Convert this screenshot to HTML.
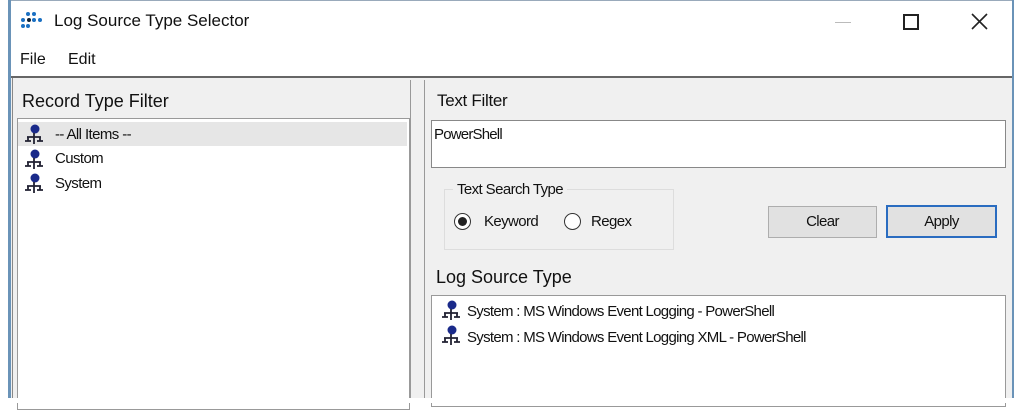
<!DOCTYPE html>
<html><head><style>
body{margin:0;width:1024px;height:403px;background:#fff;position:relative;overflow:hidden;font-family:"Liberation Sans",sans-serif;color:#111}
.a{position:absolute}
.ic{position:absolute;width:20px;height:22px}
</style></head><body>
<div class="a" style="left:0;top:0;width:9px;height:403px;background:#fff;border-right:1px solid #ccc"></div>
<div class="a" style="left:8px;top:0;width:3px;height:403px;background:#6a93b8"></div>
<div class="a" style="left:1012px;top:0;width:2px;height:403px;background:#6a93b8"></div>
<div class="a" style="left:11px;top:0;width:1001px;height:1px;background:#9ab"></div>
<svg class="a" style="left:20px;top:11px" width="26" height="22"><g fill="#1a6fc2"><circle cx="8" cy="3" r="2"/><circle cx="14" cy="3" r="2"/><circle cx="3" cy="9" r="2"/><circle cx="14" cy="9" r="2"/><circle cx="20" cy="9" r="2"/><circle cx="3" cy="15" r="2"/><circle cx="8" cy="15" r="2"/></g><circle cx="9" cy="9" r="2" fill="#123"/></svg>
<div class="a" style="left:54px;top:11px;font-size:17px">Log Source Type Selector</div>
<div class="a" style="left:835px;top:22px;width:16px;height:1px;background:#bbb"></div>
<div class="a" style="left:903px;top:14px;width:12px;height:12px;border:2px solid #222"></div>
<svg class="a" style="left:971px;top:13px" width="17" height="17"><path d="M1 1L16 16M16 1L1 16" stroke="#222" stroke-width="1.6"/></svg>
<div class="a" style="left:20px;top:51px;font-size:16px">File</div>
<div class="a" style="left:68px;top:51px;font-size:16px">Edit</div>
<div class="a" style="left:11px;top:76px;width:1001px;height:2px;background:#666"></div>
<div class="a" style="left:11px;top:78px;width:1001px;height:325px;background:#f0f0f0"></div>
<div class="a" style="left:12px;top:78px;width:398px;height:325px;border-left:1px solid #888"></div>
<div class="a" style="left:410px;top:80px;width:1px;height:323px;background:#999"></div>
<div class="a" style="left:424px;top:80px;width:1px;height:323px;background:#999"></div>
<div class="a" style="left:22px;top:91px;font-size:18px">Record Type Filter</div>
<div class="a" style="left:17px;top:118px;width:391px;height:290px;background:#fff;border:1px solid #999"></div>
<div class="a" style="left:18px;top:122px;width:389px;height:24px;background:#e6e6e6"></div>
<div class="a" style="left:55px;top:126px;font-size:15px;letter-spacing:-.6px">-- All Items --</div>
<div class="a" style="left:55px;top:150px;font-size:15px;letter-spacing:-.6px">Custom</div>
<div class="a" style="left:55px;top:175px;font-size:15px;letter-spacing:-.6px">System</div>
<svg width="0" height="0" style="position:absolute"><defs><g id="n"><circle cx="11" cy="5" r="4.5" fill="#1a2a8a"/><path d="M10 9V13M3 13H17M4 13V17M16 13V17M1 17H7M10 13V20M13 17H19" stroke="#223" stroke-width="1.8" fill="none"/></g></defs></svg>
<svg class="ic" style="left:24px;top:124px"><use href="#n"/></svg>
<svg class="ic" style="left:24px;top:149px"><use href="#n"/></svg>
<svg class="ic" style="left:24px;top:173px"><use href="#n"/></svg>
<div class="a" style="left:437px;top:91px;font-size:17px;letter-spacing:-.3px">Text Filter</div>
<div class="a" style="left:431px;top:120px;width:573px;height:46px;background:#fff;border:1px solid #888"></div>
<div class="a" style="left:434px;top:126px;font-size:15px;letter-spacing:-.8px">PowerShell</div>
<div class="a" style="left:444px;top:189px;width:228px;height:59px;border:1px solid #ddd"></div>
<div class="a" style="left:453px;top:181px;padding:0 4px;background:#f0f0f0;font-size:15px;letter-spacing:-.6px">Text Search Type</div>
<div class="a" style="left:454px;top:213px;width:15px;height:15px;border:1px solid #333;border-radius:50%;background:#fff"></div>
<div class="a" style="left:458px;top:217px;width:9px;height:9px;border-radius:50%;background:#222"></div>
<div class="a" style="left:484px;top:213px;font-size:15px;letter-spacing:-.6px">Keyword</div>
<div class="a" style="left:564px;top:213px;width:15px;height:15px;border:1px solid #333;border-radius:50%;background:#fff"></div>
<div class="a" style="left:591px;top:213px;font-size:15px;letter-spacing:-.6px">Regex</div>
<div class="a" style="left:768px;top:206px;width:107px;height:30px;border:1px solid #adadad;background:#e1e1e1;font-size:15px;text-align:center;line-height:30px;letter-spacing:-.6px">Clear</div>
<div class="a" style="left:886px;top:205px;width:107px;height:29px;border:2px solid #2a6cc0;background:#e1e1e1;font-size:15px;text-align:center;line-height:29px;letter-spacing:-.6px">Apply</div>
<div class="a" style="left:436px;top:267px;font-size:18px">Log Source Type</div>
<div class="a" style="left:431px;top:295px;width:573px;height:110px;background:#fff;border:1px solid #999"></div>
<svg class="ic" style="left:441px;top:300px"><use href="#n"/></svg>
<svg class="ic" style="left:441px;top:325px"><use href="#n"/></svg>
<div class="a" style="left:467px;top:303px;font-size:15px;letter-spacing:-.7px">System : MS Windows Event Logging - PowerShell</div>
<div class="a" style="left:467px;top:329px;font-size:15px;letter-spacing:-.7px">System : MS Windows Event Logging XML - PowerShell</div>
<div class="a" style="left:0;top:398px;width:1024px;height:5px;background:#fff"></div>
</body></html>
